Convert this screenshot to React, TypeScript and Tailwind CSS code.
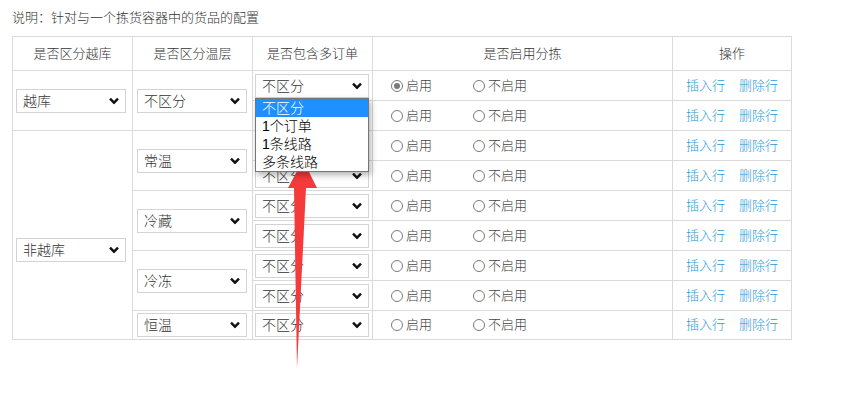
import React from 'react';

const font = { fontFamily: '"Liberation Sans", "Noto Sans CJK SC", sans-serif' };

function Chevron() {
    return (
        <svg width="10" height="7" viewBox="0 0 10 7" className="absolute right-[6px] top-1/2 -translate-y-1/2">
            <path d="M1 1.2 L5 5.2 L9 1.2" fill="none" stroke="#111" strokeWidth="2.4" />
        </svg>
    );
}

function Select({ value, width = 'w-[110px]' }: { value: string; width?: string }) {
    return (
        <div className={`relative h-[24px] ${width} border border-[#d4d4d4] bg-white pl-[6px] text-[14px] leading-[22px] text-[#333]`}>
            {value}
            <Chevron />
        </div>
    );
}

function Radio({ checked }: { checked?: boolean }) {
    return (
        <span className="inline-flex h-[12px] w-[12px] items-center justify-center rounded-full border border-[#7a7a7a] bg-white">
            {checked && <span className="h-[6px] w-[6px] rounded-full bg-[#7a7a7a]" />}
        </span>
    );
}

function RadioCell({ checked }: { checked?: boolean }) {
    return (
        <td className="border border-[#dadada] pl-[18px] text-[13px] text-[#444]">
            <div className="flex items-center">
                <label className="flex w-[82px] items-center gap-[3px]">
                    <Radio checked={checked} />
                    <span>启用</span>
                </label>
                <label className="flex items-center gap-[3px]">
                    <Radio />
                    <span>不启用</span>
                </label>
            </div>
        </td>
    );
}

function OpsCell() {
    return (
        <td className="border border-[#dadada] text-center text-[13px] text-[#2a9ad8]">
            <a className="mr-[14px]">插入行</a>
            <a>删除行</a>
        </td>
    );
}

function OrderCell({ open }: { open?: boolean }) {
    return (
        <td className="border border-[#dadada] pl-[2px] align-middle">
            <div className="relative">
                <Select value="不区分" width="w-[114px]" />
                {open && (
                    <div className="absolute left-0 top-[24px] z-20 w-[114px] border border-[#767676] bg-white text-[14px] leading-[18px] text-black shadow-[2px_3px_6px_rgba(0,0,0,0.3)]">
                        <div className="bg-[#1e90ff] pl-[6px] text-white">不区分</div>
                        <div className="pl-[6px]">1个订单</div>
                        <div className="pl-[6px]">1条线路</div>
                        <div className="pl-[6px]">多条线路</div>
                    </div>
                )}
            </div>
        </td>
    );
}

const td = 'border border-[#dadada]';

export default function App() {
    return (
        <div className="relative min-h-[397px] w-[846px] bg-white px-[12px] pt-[10px] font-light" style={font}>
            <p className="mb-[10px] text-[13px] leading-[16px] text-[#333]">说明：针对与一个拣货容器中的货品的配置</p>

            <table className="w-[779px] table-fixed border-collapse">
                <colgroup>
                    <col className="w-[120px]" />
                    <col className="w-[120px]" />
                    <col className="w-[120px]" />
                    <col className="w-[300px]" />
                    <col className="w-[119px]" />
                </colgroup>
                <thead>
                    <tr className="h-[34px] text-[13px] text-[#333]">
                        <th className={`${td} font-light`}>是否区分越库</th>
                        <th className={`${td} font-light`}>是否区分温层</th>
                        <th className={`${td} font-light`}>是否包含多订单</th>
                        <th className={`${td} font-light`}>是否启用分拣</th>
                        <th className={`${td} font-light`}>操作</th>
                    </tr>
                </thead>
                <tbody>
                    <tr className="h-[30px]">
                        <td rowSpan={2} className={`${td} pl-[3px]`}><Select value="越库" /></td>
                        <td rowSpan={2} className={`${td} pl-[4px]`}><Select value="不区分" /></td>
                        <OrderCell open />
                        <RadioCell checked />
                        <OpsCell />
                    </tr>
                    <tr className="h-[30px]">
                        <OrderCell />
                        <RadioCell />
                        <OpsCell />
                    </tr>
                    <tr className="h-[30px]">
                        <td rowSpan={7} className={`${td} pl-[3px] align-top pt-[107px]`}><Select value="非越库" /></td>
                        <td rowSpan={2} className={`${td} pl-[4px]`}><Select value="常温" /></td>
                        <OrderCell />
                        <RadioCell />
                        <OpsCell />
                    </tr>
                    <tr className="h-[30px]">
                        <OrderCell />
                        <RadioCell />
                        <OpsCell />
                    </tr>
                    <tr className="h-[30px]">
                        <td rowSpan={2} className={`${td} pl-[4px]`}><Select value="冷藏" /></td>
                        <OrderCell />
                        <RadioCell />
                        <OpsCell />
                    </tr>
                    <tr className="h-[30px]">
                        <OrderCell />
                        <RadioCell />
                        <OpsCell />
                    </tr>
                    <tr className="h-[30px]">
                        <td rowSpan={2} className={`${td} pl-[4px]`}><Select value="冷冻" /></td>
                        <OrderCell />
                        <RadioCell />
                        <OpsCell />
                    </tr>
                    <tr className="h-[30px]">
                        <OrderCell />
                        <RadioCell />
                        <OpsCell />
                    </tr>
                    <tr className="h-[29px]">
                        <td className={`${td} pl-[4px]`}><Select value="恒温" /></td>
                        <OrderCell />
                        <RadioCell />
                        <OpsCell />
                    </tr>
                </tbody>
            </table>

            {/* annotation arrow */}
            <svg className="absolute left-0 top-0 z-10 pointer-events-none" width="846" height="397">
                <polygon points="303,160 317,188 306,188 297,368 294,188 288,188" fill="#f43a3a" />
            </svg>
        </div>
    );
}
